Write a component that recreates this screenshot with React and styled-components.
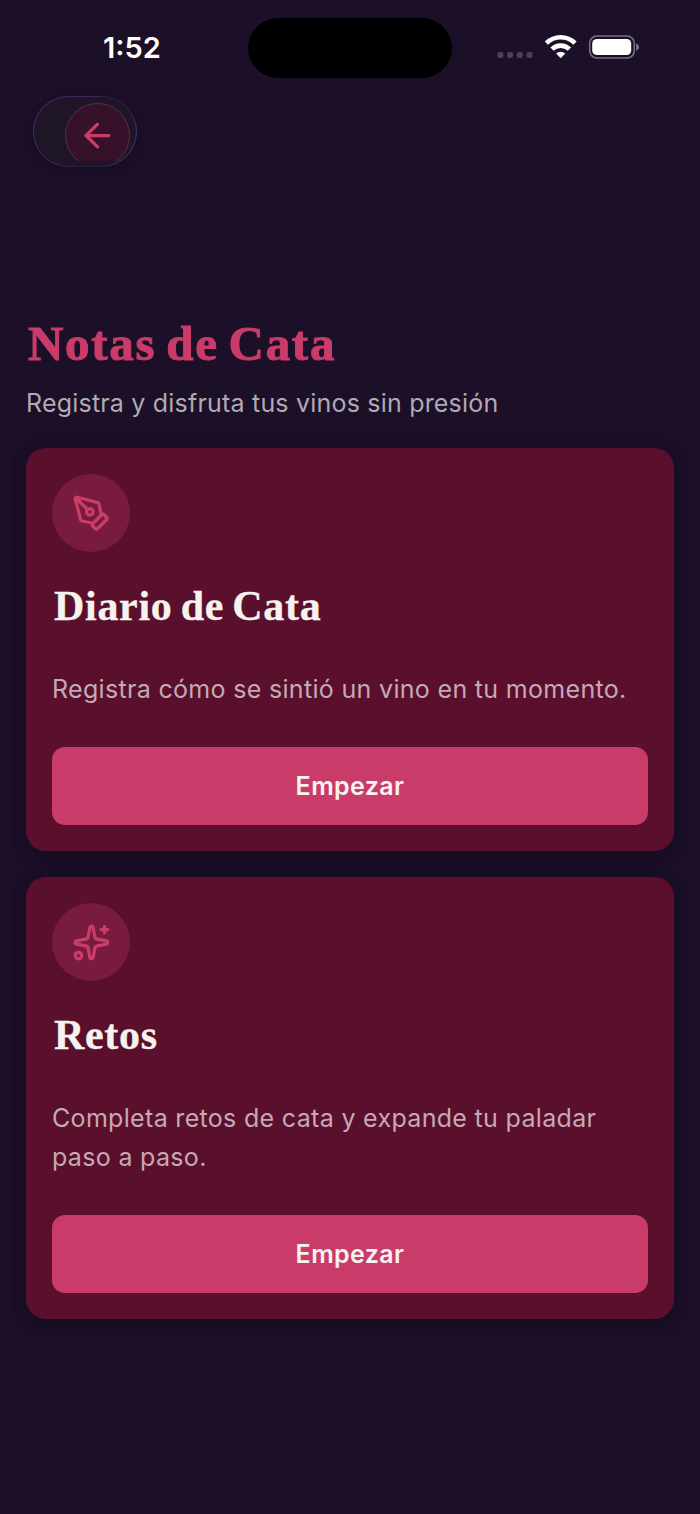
import React from "react";
import styled, { createGlobalStyle } from "styled-components";
import { ArrowLeft, PenTool, Sparkles } from "lucide-react";

const GlobalStyle = createGlobalStyle`
  * { box-sizing: border-box; }
  body { margin: 0; background: #1c0f28; }
`;

const Screen = styled.div`
  width: 700px;
  height: 1514px;
  overflow: hidden;
  background: #1c0f28;
  font-family: Inter, "Liberation Sans", sans-serif;
`;

const Header = styled.header`
  height: 183px;
  border-bottom: 1px solid #181024;
`;

const StatusBar = styled.div`
  height: 96px;
  padding: 18px 60px 0 103px;
  display: flex;
  align-items: flex-start;
`;

const Clock = styled.span`
  width: 145px;
  margin-top: 12px;
  color: #fff;
  font-size: 29px;
  line-height: 36px;
  font-weight: 600;
  letter-spacing: 0;
  white-space: nowrap;
`;

const Island = styled.div`
  width: 204px;
  height: 60px;
  border-radius: 30px;
  background: #000;
`;

const StatusIcons = styled.svg`
  display: block;
  width: 144px;
  height: 26px;
  margin: 16px 0 0 44px;
`;

const BackTrack = styled.div`
  width: 104px;
  height: 71px;
  margin-left: 33px;
  padding: 6.5px 0 5px 32px;
  border-radius: 36px;
  background: linear-gradient(115deg, #4a2c6c 0%, #3a2558 40%, #2a1d3c 68%, #4a2f70 88%, #4a2f70 100%);
  position: relative;
  isolation: isolate;
  box-shadow: 0 3px 10px rgba(16, 10, 32, 0.3);

  &::before {
    content: "";
    position: absolute;
    inset: 1px;
    z-index: -1;
    border-radius: 35px;
    background: #1e1627;
  }
`;

const BackClip = styled.div`
  width: 66px;
  height: 58.5px;
  overflow: hidden;
`;

const BackButton = styled.button`
  display: flex;
  align-items: center;
  justify-content: center;
  width: 65px;
  height: 65px;
  padding: 0;
  border: 1px solid #582e49;
  border-radius: 50%;
  background: #351229;
  color: #cb3d69;
`;

const Main = styled.main`
  padding: 135px 26px 0;
`;

const PageTitle = styled.h1`
  margin: 0;
  padding-left: 2px;
  color: #c93c69;
  font-family: "Liberation Serif", serif;
  font-size: 49px;
  font-weight: 700;
  line-height: 51px;
  height: 52px;
  letter-spacing: 1.7px;
  word-spacing: -4px;
  -webkit-text-stroke: 1px currentColor;
  white-space: nowrap;
`;

const Subtitle = styled.p`
  margin: 13px 0 25px;
  color: #b1a9b3;
  font-size: 25px;
  line-height: 40px;
  letter-spacing: 0.2px;
  white-space: nowrap;
`;

const CardList = styled.div`
  display: flex;
  flex-direction: column;
  gap: 26px;
`;

const Card = styled.section`
  padding: 26px;
  border-radius: 20px;
  background: #5a0f2c;
  box-shadow: 0 6px 13px rgba(22, 12, 30, 0.6), 0 0 14px rgba(20, 16, 40, 0.35);
`;

const IconBadge = styled.div`
  display: flex;
  align-items: center;
  justify-content: center;
  width: 78px;
  height: 78px;
  border-radius: 50%;
  background: #781b3f;
  color: #cb3d69;
`;

const CardTitle = styled.h2`
  margin: 29px 0 39px;
  padding-left: 2px;
  color: #f6f3ee;
  font-family: "Liberation Serif", serif;
  font-size: 42px;
  font-weight: 700;
  line-height: 50px;
  letter-spacing: 0.7px;
  word-spacing: -3px;
  -webkit-text-stroke: 0.3px currentColor;
  white-space: nowrap;
`;

const Description = styled.p`
  margin: 0 0 38px;
  color: #c5a9b5;
  font-size: 25px;
  line-height: 39px;
  letter-spacing: 0.32px;
  white-space: pre;
`;

const StartButton = styled.button`
  display: block;
  width: 100%;
  height: 78px;
  padding: 0;
  border: 0;
  border-radius: 13px;
  background: #c93c69;
  color: #f8f3ee;
  font-family: inherit;
  font-size: 25px;
  font-weight: 600;
  letter-spacing: 0.4px;
`;

const cards = [
  {
    title: "Diario de Cata",
    text: "Registra cómo se sintió un vino en tu momento.",
    Icon: PenTool,
  },
  {
    title: "Retos",
    text: "Completa retos de cata y expande tu paladar\npaso a paso.",
    Icon: Sparkles,
  },
];

function StatusGlyphs() {
  return (
    <StatusIcons viewBox="496 34 144 26">
      {[497.4, 507.1, 516.8, 526.5].map((x) => (
        <rect key={x} x={x} y="52" width="6" height="6" rx="2" fill="#4b4054" />
      ))}
      <g fill="none" stroke="#fff" strokeWidth="4.6">
        <path d="M546.4 43.2a20.3 20.3 0 0 1 28.6 0" />
        <path d="M552 49.2a12.3 12.3 0 0 1 17.4 0" />
      </g>
      <path d="M560.7 58.3l-4.6-4.8a6.6 6.6 0 0 1 9.2 0z" fill="#fff" />
      <rect x="589.7" y="36" width="44.6" height="22" rx="7.3" fill="none" stroke="#776f7e" strokeWidth="1.6" />
      <rect x="592.2" y="39" width="39" height="16" rx="4.6" fill="#fff" />
      <path d="M636.3 43.5c3.5 1.2 3.5 6 0 7.2z" fill="#857e8b" />
    </StatusIcons>
  );
}

export default function App() {
  return (
    <Screen>
      <GlobalStyle />
      <Header>
        <StatusBar>
          <Clock>1:52</Clock>
          <Island />
          <StatusGlyphs />
        </StatusBar>
        <BackTrack>
          <BackClip>
            <BackButton aria-label="Volver">
              <ArrowLeft size={39} strokeWidth={2} />
            </BackButton>
          </BackClip>
        </BackTrack>
      </Header>
      <Main>
        <PageTitle>Notas de Cata</PageTitle>
        <Subtitle>Registra y disfruta tus vinos sin presión</Subtitle>
        <CardList>
          {cards.map(({ title, text, Icon }) => (
            <Card key={title}>
              <IconBadge>
                <Icon size={39} strokeWidth={2} />
              </IconBadge>
              <CardTitle>{title}</CardTitle>
              <Description>{text}</Description>
              <StartButton>Empezar</StartButton>
            </Card>
          ))}
        </CardList>
      </Main>
    </Screen>
  );
}
